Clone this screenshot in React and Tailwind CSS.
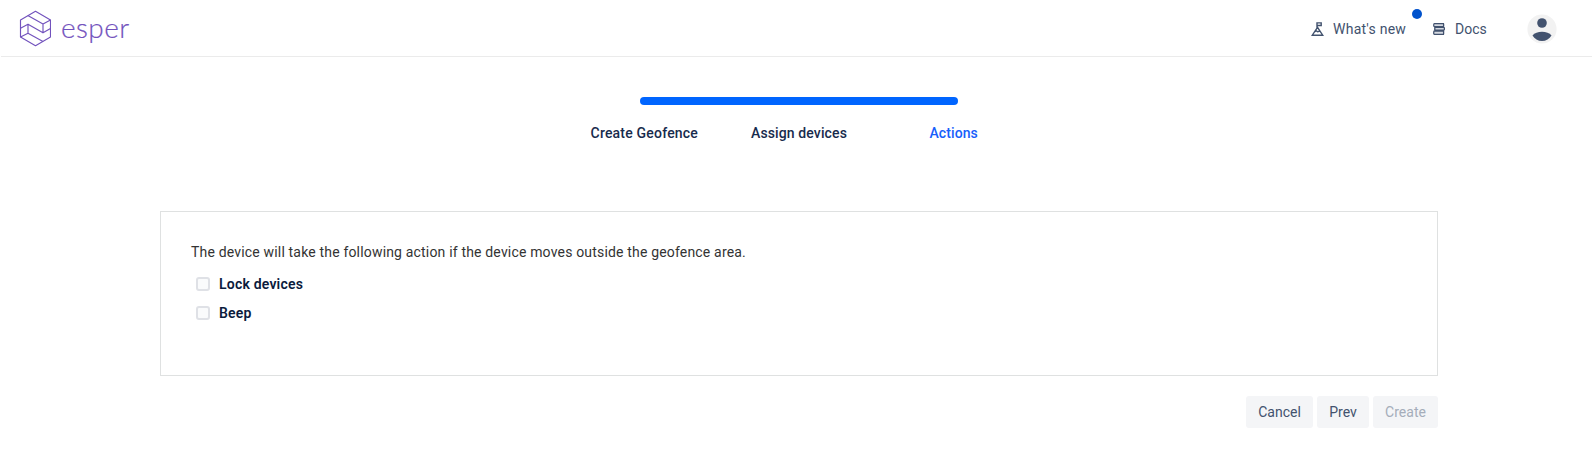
function Logo() {
  return (
    <div className="flex h-14 items-center text-[#7252bd]">
      <svg className="mt-[1px] h-[37px] w-8" viewBox="0 0 32 37" fill="none" stroke="currentColor" strokeWidth="1.15" strokeLinejoin="round">
        <path d="M16.5 1.3 31.5 10v17L16.5 35.7 1.5 27V10Z" />
        <path d="M8.8 5.500 24 14 31.500 10M24 14v8.800L31.500 18.600M24 22.800 9 14.200 1.500 18.200M9 14.200v9L1.500 27M9 23.200l15 8.300" />
      </svg>
      <span className="-mt-[2px] ml-[10px] font-[Lato] text-[28px] leading-7 font-light tracking-[0.4px] [-webkit-text-stroke:0.2px_currentColor]">esper</span>
    </div>
  );
}

function FlagIcon() {
  return (
    <svg className="h-[14px] w-[13px]" viewBox="0 0 13 14" fill="none" stroke="currentColor" strokeWidth="1.4">
      <path d="M6 5.800V.9h4.200v2.600H6M6.500 5.300 1.300 13.200h10.400L6.500 5.300ZM3.900 9.500l1.400-.7 1.300 1 2.400-.8" />
    </svg>
  );
}

function BooksIcon() {
  return (
    <svg className="h-3 w-3" viewBox="0 0 12 12" fill="#d5d9e0" stroke="currentColor" strokeWidth="1.3">
      <path d="M11 .7H1.400Q.7.7.7 2.200t.8 1.500H11M1.500 4.300h9.200q.7 0 .7 1.400t-.7 1.500H1.500M11 8H1.400Q.7 8 .7 9.700t.8 1.600H11" />
      <path d="M10.600.7v3M1.800 4.300v3M10.600 8v3.300" />
    </svg>
  );
}

function Avatar() {
  return (
    <svg className="h-[30px] w-[30px]" viewBox="0 0 30 30">
      <circle cx="15" cy="15" r="14.600" fill="#f2f2f2" />
      <g fill="#42526e">
        <circle cx="15" cy="9" r="4.800" />
        <path d="M5.500 21.500c2-2.500 5.500-3.700 9.500-3.700s7.500 1.200 9.500 3.700C22.500 25 19 27 15 27s-7.500-2-9.500-5.500Z" />
      </g>
    </svg>
  );
}

function Check({ children }) {
  return (
    <label className="flex h-[29px] items-center pl-[5px] text-sm font-semibold text-[#0b1b3d]">
      <span className="h-[14px] w-[14px] rounded-[3px] border-2 border-[#dfe1e6] bg-[#fafbfc]" />
      <span className="ml-[9px] whitespace-nowrap tracking-[0.2px]">{children}</span>
    </label>
  );
}

export default function App() {
  return (
    <div className="h-[464px] w-[1592px] overflow-hidden bg-white font-[Roboto,sans-serif] text-sm">
      <header className="ml-px flex h-[57px] justify-between border-b border-[#ebebeb] pl-[18px] text-[#42526e]">
        <Logo />
        <nav className="flex h-14 items-center pr-[35px] pt-[2px]">
          <FlagIcon />
          <span className="relative ml-[9px] w-[74px] whitespace-nowrap tracking-[0.25px]">
            What's new
            <span className="absolute -top-[10px] left-[79px] h-[10px] w-[10px] rounded-full bg-[#0052cc]" />
          </span>
          <span className="ml-[26px] flex items-center">
            <BooksIcon />
          </span>
          <span className="ml-[10px] w-[32px]">Docs</span>
          <span className="ml-[40px]">
            <Avatar />
          </span>
        </nav>
      </header>
      <main className="ml-[160px] w-[1278px]">
        <div className="flex flex-col items-center pt-10">
          <div className="h-2 w-[318px] rounded-[4px] bg-[#0065ff]" />
          <div className="mt-[18px] grid h-5 w-[464px] grid-cols-3 text-center font-medium leading-5 text-[#172b4d]">
            <span className="tracking-[0.2px]">Create Geofence</span>
            <span className="tracking-[0.12px]">Assign devices</span>
            <span className="tracking-[0.1px] text-[#1760fb]">Actions</span>
          </div>
        </div>
        <section className="mt-[68px] h-[165px] border border-[#dfe1e1] px-[30px] pt-[30px] text-[#333]">
          <p className="h-[27px] leading-5 tracking-[0.175px]">
            The device will take the following action if the device moves outside the geofence area.
          </p>
          <Check>Lock devices</Check>
          <Check>Beep</Check>
        </section>
        <div className="mt-5 flex justify-end gap-1 text-[#42526e]">
          <button className="h-8 w-[67px] rounded-[3px] bg-[#f4f5f7]">Cancel</button>
          <button className="h-8 w-[52px] rounded-[3px] bg-[#f4f5f7]">Prev</button>
          <button className="h-8 w-[65px] rounded-[3px] bg-[#f4f5f7] text-[#a5adba]">Create</button>
        </div>
      </main>
    </div>
  );
}
